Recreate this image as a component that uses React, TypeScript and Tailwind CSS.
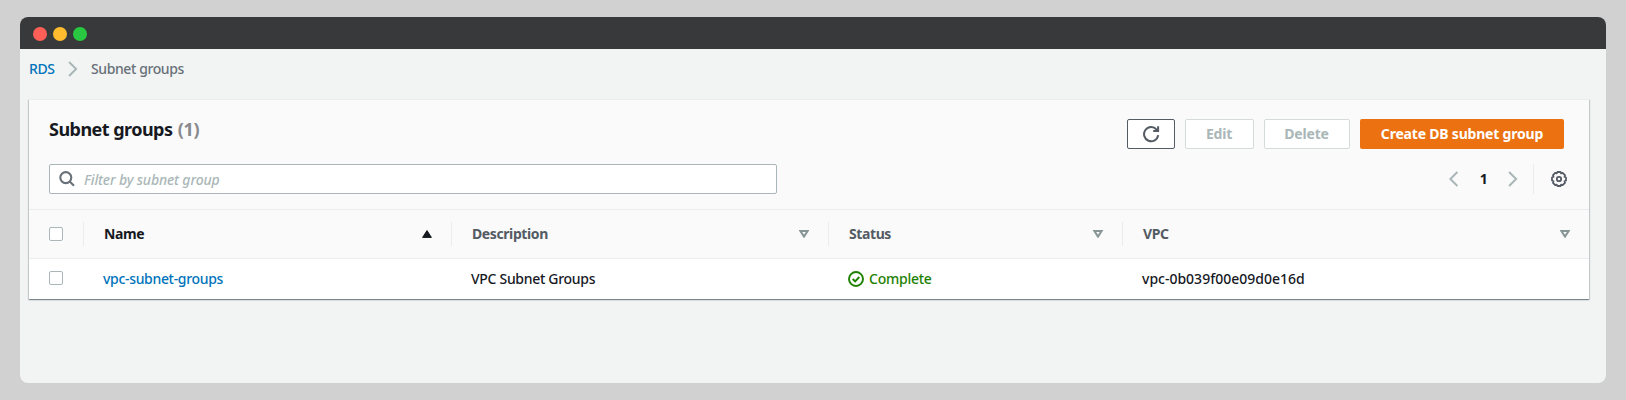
import type { ReactNode } from "react";

function Chevron({ left = false }: { left?: boolean }) {
  return (
    <svg width="10" height="16" viewBox="0 0 10 16" fill="none" stroke="#aab7b8" strokeWidth="2" className="block shrink-0">
      <path d={left ? "M8.4 1L1.4 8l7 7" : "M1.1 1l7 7-7 7"} />
    </svg>
  );
}

function SearchIcon() {
  return (
    <svg width="16" height="16" viewBox="0 0 16 16" fill="none" stroke="#687078" strokeWidth="2.1" className="block shrink-0">
      <circle cx="6.8" cy="6.6" r="5.5" />
      <path d="M10.7 10.6l4.3 4.1" />
    </svg>
  );
}

function RefreshIcon() {
  return (
    <svg width="18" height="18" viewBox="0 0 18 18" fill="none" stroke="#545b64" strokeWidth="2" className="block shrink-0">
      <path d="M16.2 10.2A7.1 7.1 0 1 1 14.6 4.6L16 5.8" />
      <path d="M16.1 1.3V6H11.2" />
    </svg>
  );
}

function GearIcon() {
  return (
    <svg width="16" height="16" viewBox="0 0 16 16" fill="none" stroke="#545b64" className="block shrink-0">
      <path
        d="M6.5 1h3l.6 1.300 1.500-.5 2.400 2.400-.5 1.500 1.500.8v3l-1.500.8.5 1.500-2.400 2.400-1.500-.5-.6 1.300h-3l-.8-1.300-1.500.5-2.200-2.400.5-1.500L1 9.500v-3l1.500-.8L2 4.200l2.200-2.400 1.500.5z"
        strokeWidth="1.8"
        strokeLinejoin="round"
      />
      <circle cx="8" cy="8" r="2.2" strokeWidth="1.8" />
    </svg>
  );
}

function CheckIcon() {
  return (
    <svg width="16" height="16" viewBox="0 0 16 16" fill="none" stroke="#1d8102" strokeWidth="1.9" className="block shrink-0">
      <circle cx="8" cy="8" r="7" />
      <path d="M4.7 8l2.4 2.3 4.2-4.3" />
    </svg>
  );
}

function SortIcon({ active = false }: { active?: boolean }) {
  return active ? (
    <svg width="10" height="8" viewBox="0 0 10 8" className="block shrink-0">
      <path d="M5 0.6L9.4 7.4H0.6z" fill="#16191f" stroke="#16191f" strokeWidth="1" strokeLinejoin="round" />
    </svg>
  ) : (
    <svg width="10" height="8" viewBox="0 0 10 8" className="block shrink-0">
      <path d="M1.4 1h7.2L5 6.6z" fill="none" stroke="#879596" strokeWidth="2" />
    </svg>
  );
}

function Checkbox() {
  return <span className="block size-[14px] shrink-0 rounded-[2px] border border-[#aab7b8] bg-white" />;
}

function HeaderCell({ children, active = false }: { children: ReactNode; active?: boolean }) {
  return (
    <div
      className={
        "flex h-6 items-center justify-between border-l border-[#eaeded] pr-[19px] pl-5 font-bold " +
        (active ? "text-[#16191f]" : "text-[#545b64]")
      }
    >
      <span>{children}</span>
      <SortIcon active={active} />
    </div>
  );
}

const columns = "grid grid-cols-[54px_368px_377px_294px_1fr] items-center";

export default function App() {
  return (
    <div className="h-[400px] w-[1626px] bg-[#d1d1d1] px-5 pt-[17px] font-['Noto_Sans',sans-serif] text-[14px] leading-5 tracking-[-0.4px] text-[#16191f]">
      <div className="h-[366px] overflow-hidden rounded-lg bg-[#f2f4f4]">
        <div className="flex h-8 items-center gap-[6.5px] bg-[#38393b] pt-[2px] pl-[13.3px]">
          <span className="size-[13.5px] rounded-full bg-[#ff5f57]" />
          <span className="size-[13.5px] rounded-full bg-[#febc2e]" />
          <span className="size-[13.5px] rounded-full bg-[#28c840]" />
        </div>

        <nav className="flex h-[50px] items-center pb-[10px] pl-[9px] font-medium">
          <a className="w-[39px] text-[#0073bb]">RDS</a>
          <Chevron />
          <span className="pl-[13px] text-[#687078]">Subnet groups</span>
        </nav>

        <main className="mr-[17px] ml-[9px] h-[200px] border-t border-[#eaeded] bg-white shadow-[0_1px_1px_0_rgba(0,28,36,0.3),1px_1px_1px_0_rgba(0,28,36,0.15),-1px_1px_1px_0_rgba(0,28,36,0.15)]">
          <section className="h-[110px] border-b border-[#eaeded] bg-[#fafafa] pl-5">
            <div className="flex h-[64px] justify-between pt-[19px] pr-[25px]">
              <h1 className="-mt-px text-[18px] leading-[22px] font-bold tracking-[-0.53px]">
                Subnet groups <span className="ml-px tracking-[-0.2px] text-[#87898d]">(1)</span>
              </h1>
              <div className="flex gap-[10px] font-bold tracking-[-0.2px] text-[#aab7b8]">
                <button className="flex h-[30px] w-12 items-center justify-center rounded-[2px] border border-[#545b64] bg-white">
                  <RefreshIcon />
                </button>
                <button className="h-[30px] w-[69px] rounded-[2px] border border-[#d5dbdb] bg-white pr-px">Edit</button>
                <button className="h-[30px] w-[86px] rounded-[2px] border border-[#d5dbdb] bg-white pr-px">Delete</button>
                <button className="h-[30px] w-[204px] rounded-[2px] bg-[#ec7211] text-white">Create DB subnet group</button>
              </div>
            </div>
            <div className="flex justify-between pr-[22px]">
              <div className="flex h-[30px] w-[728px] items-center rounded-[2px] border border-[#aab7b8] bg-white pl-[9px]">
                <SearchIcon />
                <span className="pt-px pl-[9px] font-medium tracking-[-0.15px] text-[#aab7b8] italic">Filter by subnet group</span>
              </div>
              <div className="flex h-[30px] items-center">
                <Chevron left />
                <span className="w-[49px] text-center font-bold">1</span>
                <Chevron />
                <span className="ml-[15px] h-[30px] w-px bg-[#eaeded]" />
                <span className="ml-[17px]">
                  <GearIcon />
                </span>
              </div>
            </div>
          </section>

          <div className={columns + " h-[49px] border-b border-[#eaeded] bg-[#fafafa]"}>
            <div className="pb-px pl-5"><Checkbox /></div>
            <HeaderCell active>Name</HeaderCell>
            <HeaderCell>Description</HeaderCell>
            <HeaderCell>Status</HeaderCell>
            <HeaderCell>VPC</HeaderCell>
          </div>

          <div className={columns + " h-10 font-medium"}>
            <div className="pb-[2px] pl-5"><Checkbox /></div>
            <a className="pl-5 tracking-[-0.32px] text-[#0073bb]">vpc-subnet-groups</a>
            <span className="pl-5 tracking-[-0.3px]">VPC Subnet Groups</span>
            <span className="flex items-center gap-[5px] pl-5 tracking-[-0.25px] text-[#1d8102]">
              <CheckIcon />
              Complete
            </span>
            <span className="pl-5 tracking-normal">vpc-0b039f00e09d0e16d</span>
          </div>
        </main>
      </div>
    </div>
  );
}
